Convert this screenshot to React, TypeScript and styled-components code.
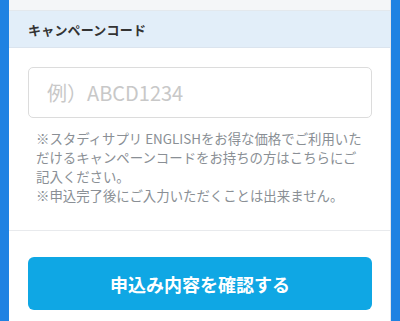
import React from "react";
import styled, { createGlobalStyle } from "styled-components";

const GlobalStyle = createGlobalStyle`
  html, body {
    margin: 0;
    padding: 0;
    background: #1f82e2;
  }
  body {
    font-family: "Noto Sans CJK JP", "Noto Sans", sans-serif;
    -webkit-font-smoothing: antialiased;
  }
`;

const App = () => {
  return (
    <>
      <GlobalStyle />
      <Frame>
        <Panel>
          <TopStrip />
          <SectionHead>キャンペーンコード</SectionHead>
          <Body>
            <CodeInput placeholder="例）ABCD1234" />
            <Note>
              ※スタディサプリ ENGLISHをお得な価格でご利用いただけるキャンペーンコードをお持ちの方はこちらにご記入ください。
              <br />
              ※申込完了後にご入力いただくことは出来ません。
            </Note>
          </Body>
          <Footer>
            <SubmitButton type="button">申込み内容を確認する</SubmitButton>
          </Footer>
        </Panel>
      </Frame>
    </>
  );
};

export default App;

const Frame = styled.div`
  padding: 0 9px;
  height: 321px;
  overflow: hidden;
`;

const Panel = styled.div`
  background: #fff;
  border-right: 1px solid #e3e6ea;
  min-height: 321px;
`;

const TopStrip = styled.div`
  height: 10px;
  background: #f4f6f8;
  border-bottom: 1px solid #e3e8ed;
`;

const SectionHead = styled.div`
  height: 36px;
  display: flex;
  align-items: center;
  padding-left: 19px;
  background: #e2eef9;
  border-bottom: 1px solid #dbe4ee;
  font-size: 13px;
  font-weight: 700;
  color: #333;
  letter-spacing: 0.2px;
`;

const Body = styled.div`
  padding: 19px 18px 25px 19px;
  border-bottom: 1px solid #e8eaed;
`;

const CodeInput = styled.input`
  display: block;
  box-sizing: border-box;
  width: 100%;
  height: 51px;
  padding: 0 18px;
  border: 1px solid #dcdcdc;
  border-radius: 5px;
  font-family: "Noto Sans CJK JP", "Noto Sans", sans-serif;
  font-size: 20px;
  color: #333;
  outline: none;

  &::placeholder {
    color: #c8c8c8;
  }
`;

const Note = styled.p`
  margin: 11px 8px 0 8px;
  font-size: 13.4px;
  line-height: 19px;
  color: #8a8f95;
`;

const Footer = styled.div`
  padding: 26px 18px 0 19px;
`;

const SubmitButton = styled.button`
  display: block;
  width: 100%;
  height: 53px;
  border: none;
  border-radius: 6px;
  background: #0fa7e4;
  color: #fff;
  font-family: "Noto Sans CJK JP", "Noto Sans", sans-serif;
  font-size: 18px;
  font-weight: 700;
  cursor: pointer;
`;
